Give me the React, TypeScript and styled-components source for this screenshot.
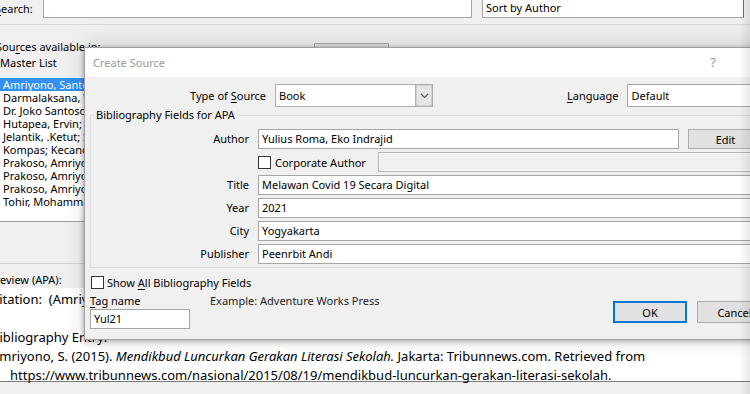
import React from "react";
import styled, { createGlobalStyle } from "styled-components";

const GlobalStyle = createGlobalStyle`
  html, body { margin: 0; padding: 0; background: #f0f0f0; }
  body {
    font-family: "Noto Sans", "Segoe UI", sans-serif;
    font-size: 11px;
    color: #000;
    overflow: hidden;
  }
  * { box-sizing: border-box; }
`;

const Screen = styled.div`
  position: relative;
  width: 750px;
  height: 394px;
  overflow: hidden;
  background: #f0f0f0;
`;

/* ---------- background window (Source Manager) ---------- */

const BackWindow = styled.div`
  margin-left: -12px;
  width: 820px;
  display: flex;
  flex-direction: column;
`;

const SearchRow = styled.div`
  display: flex;
  align-items: center;
  margin-top: -2px;
  height: 20px;
`;

const RowLabel = styled.span<{ $indent?: number; $width?: number }>`
  display: block;
  flex: none;
  padding-left: ${(p) => p.$indent ?? 0}px;
  width: ${(p) => (p.$width ? `${p.$width}px` : "auto")};
  line-height: 15px;
  white-space: nowrap;
`;

const Key = styled.span`
  text-decoration: underline;
  text-underline-offset: 2px;
`;

const Box = styled.div<{ $width?: number }>`
  flex: ${(p) => (p.$width ? "none" : "1")};
  width: ${(p) => (p.$width ? `${p.$width}px` : "auto")};
  height: 20px;
  background: #fff;
  border: 1px solid #a5a5a5;
  padding: 0 3px;
  line-height: 18px;
  white-space: nowrap;
  overflow: hidden;
`;

const SortBox = styled(Box)`
  margin-left: 10px;
  border-right-color: #6e6e6e;
`;

const Rule = styled.div<{ $top: number; $color?: string }>`
  margin-top: ${(p) => p.$top}px;
  height: 1px;
  background: ${(p) => p.$color ?? "#d9d9d9"};
`;

const SourcesRow = styled.div`
  display: flex;
  align-items: flex-start;
  height: 15px;
  margin-top: 14px;
`;

const BackButton = styled.div`
  margin-left: 210px;
  margin-top: 4px;
  width: 75px;
  height: 22px;
  background: #e1e1e1;
  border: 1px solid #adadad;
  flex: none;
`;

const MasterLabel = styled(RowLabel)`
  margin-top: 1px;
`;

const ListBox = styled.div`
  margin-top: 7px;
  width: 320px;
  height: 145px;
  background: #fff;
  border-bottom: 1px solid #a0a0a0;
  padding-top: 1px;
`;

const ListItem = styled.div<{ $selected?: boolean }>`
  height: 13px;
  line-height: 13px;
  padding-left: 15px;
  white-space: nowrap;
  background: ${(p) => (p.$selected ? "#3390f8" : "transparent")};
  color: ${(p) => (p.$selected ? "#fff" : "#000")};
`;

const PreviewLabel = styled(RowLabel)`
  margin-top: 8px;
`;

const PreviewBox = styled.div`
  margin-top: 1px;
  height: 94px;
  background: #fff;
  border-bottom: 1px solid #7a7a7a;
  padding: 2px 0 0 3px;
  font-size: 13px;
  line-height: 19px;
`;

const PreviewLine = styled.div<{ $hang?: boolean }>`
  white-space: pre;
  padding-left: ${(p) => (p.$hang ? 19 : 0)}px;
`;

/* ---------- dialog (Create Source) ---------- */

const Dialog = styled.div`
  position: absolute;
  left: 84px;
  top: 47px;
  width: 720px;
  height: 293px;
  background: #f0f0f0;
  border: 1px solid #9f9f9f;
  box-shadow: 0 -4px 22px rgba(0, 0, 0, 0.13), 0 3px 6px rgba(0, 0, 0, 0.18),
    -1px 0 4px rgba(0, 0, 0, 0.15);
  display: flex;
  flex-direction: column;
`;

const TitleBar = styled.div`
  height: 29px;
  background: #fff;
  display: flex;
  align-items: center;
  justify-content: space-between;
  padding-left: 8px;
  padding-bottom: 1px;
  color: #999;
  flex: none;
`;

const Help = styled.span`
  margin-right: 87px;
  font-size: 13px;
  color: #9a9a9a;
`;

const Body = styled.div`
  padding-top: 7px;
  display: flex;
  flex-direction: column;
`;

const TypeRow = styled.div`
  display: flex;
  align-items: center;
  height: 23px;
`;

const TypeLabel = styled.span`
  width: 181px;
  text-align: right;
  flex: none;
`;

const Select = styled.div`
  margin-left: 9px;
  width: 158px;
  height: 23px;
  display: flex;
  border: 1px solid #adadad;
  background: #fff;
  flex: none;
`;

const SelectValue = styled.div`
  flex: 1;
  padding-left: 3px;
  line-height: 21px;
`;

const SelectArrow = styled.div`
  width: 17px;
  background: #e5e5e5;
  border-left: 1px solid #adadad;
  box-shadow: inset 0 0 0 1px #d0d0d0;
  display: flex;
  align-items: center;
  justify-content: center;
`;

const LanguageLabel = styled.span`
  margin-left: 134px;
  flex: none;
`;

const LanguageBox = styled(Box)`
  margin-left: 9px;
  height: 23px;
  line-height: 21px;
`;

const Group = styled.fieldset`
  margin: 1px 0 0 5px;
  width: 700px;
  border: 1px solid #dcdcdc;
  padding: 7px 8px 3px 0;
  min-width: 0;
`;

const Legend = styled.legend`
  margin-left: 3px;
  padding: 0 2px;
  line-height: 14px;
`;

const FieldGrid = styled.div`
  display: grid;
  grid-template-columns: 158px 1fr;
  column-gap: 9px;
  row-gap: 3px;
  grid-auto-rows: 20px;
`;

const FieldName = styled.div`
  text-align: right;
  line-height: 20px;
`;

const FieldLine = styled.div`
  display: flex;
  align-items: center;
  min-width: 0;
`;

const Button = styled.div<{ $default?: boolean; $width: number; $height: number }>`
  width: ${(p) => p.$width}px;
  height: ${(p) => p.$height}px;
  flex: none;
  background: #e1e1e1;
  border: ${(p) => (p.$default ? "2px solid #0078d7" : "1px solid #adadad")};
  display: flex;
  align-items: center;
  justify-content: center;
`;

const EditButton = styled(Button)`
  margin-left: 9px;
`;

const Check = styled.span`
  display: block;
  width: 13px;
  height: 13px;
  border: 1px solid #333;
  background: #fff;
  flex: none;
`;

const CheckWrap = styled.div<{ $width?: number }>`
  display: flex;
  align-items: center;
  width: ${(p) => (p.$width ? `${p.$width}px` : "auto")};
  flex: none;
`;

const CheckText = styled.span<{ $gap: number }>`
  margin-left: ${(p) => p.$gap}px;
  white-space: nowrap;
`;

const DisabledBox = styled.div`
  flex: 1;
  height: 20px;
  background: #f0f0f0;
  border: 1px solid #b4b4b4;
  box-shadow: inset 0 0 0 1px #fafafa;
`;

const ShowAllRow = styled.div`
  margin-top: 7px;
  height: 15px;
  padding-left: 6px;
  display: flex;
  align-items: center;
`;

const BottomArea = styled.div`
  display: flex;
  align-items: flex-start;
`;

const TagColumn = styled.div`
  width: 528px;
  flex: none;
  padding-left: 5px;
  display: flex;
  flex-direction: column;
`;

const TagLine = styled.div`
  margin-top: 3px;
  height: 15px;
  line-height: 15px;
  display: flex;
`;

const TagName = styled.span`
  width: 120px;
  flex: none;
`;

const Example = styled.span`
  color: #1e1e1e;
  white-space: nowrap;
`;

const TagBox = styled(Box)`
  margin-top: 1px;
`;

const ButtonBar = styled.div`
  margin-top: 11px;
  display: flex;
  gap: 10px;
`;

const EdgeShade = styled.div`
  position: absolute;
  top: 0;
  right: 0;
  width: 12px;
  height: 100%;
  pointer-events: none;
  background: linear-gradient(to right, rgba(0, 0, 0, 0), rgba(0, 0, 0, 0.08));
`;

const sources = [
  "Amriyono, Santoso",
  "Darmalaksana, Wahyudin",
  "Dr. Joko Santoso",
  "Hutapea, Ervin; Ahmad",
  "Jelantik, .Ketut; Sutama",
  "Kompas; Kecanduan Gadget",
  "Prakoso, Amriyono",
  "Prakoso, Amriyono",
  "Prakoso, Amriyono",
  "Tohir, Mohammad",
];

const fields: [string, string][] = [
  ["Title", "Melawan Covid 19 Secara Digital"],
  ["Year", "2021"],
  ["City", "Yogyakarta"],
  ["Publisher", "Peenrbit Andi"],
];

const Chevron = () => (
  <svg width="9" height="6" viewBox="0 0 9 6">
    <path d="M1 1 L4.5 4.5 L8 1" fill="none" stroke="#555" strokeWidth="1.1" />
  </svg>
);

export default function App() {
  return (
    <Screen>
      <GlobalStyle />
      <BackWindow>
        <SearchRow>
          <RowLabel $indent={7} $width={55}>
            <Key>S</Key>earch:
          </RowLabel>
          <Box $width={429} />
          <SortBox $width={262}>Sort by Author</SortBox>
        </SearchRow>
        <Rule $top={6} />
        <SourcesRow>
          <RowLabel $indent={8} $width={116}>
            Sou<Key>r</Key>ces available in:
          </RowLabel>
          <BackButton />
        </SourcesRow>
        <MasterLabel $indent={12}>Master List</MasterLabel>
        <ListBox>
          {sources.map((s, i) => (
            <ListItem key={i} $selected={i === 0}>
              {s}
            </ListItem>
          ))}
        </ListBox>
        <Rule $top={41} $color="#d2d2d2" />
        <PreviewLabel $indent={1}>Preview (APA):</PreviewLabel>
        <PreviewBox>
          <PreviewLine>Citation:  (Amriyono, 2015)</PreviewLine>
          <PreviewLine> </PreviewLine>
          <PreviewLine>Bibliography Entry:</PreviewLine>
          <PreviewLine>
            Amriyono, S. (2015). <i>Mendikbud Luncurkan Gerakan Literasi Sekolah.</i> Jakarta:
            Tribunnews.com. Retrieved from
          </PreviewLine>
          <PreviewLine $hang>
            https://www.tribunnews.com/nasional/2015/08/19/mendikbud-luncurkan-gerakan-literasi-sekolah.
          </PreviewLine>
        </PreviewBox>
      </BackWindow>

      <Dialog>
        <TitleBar>
          <span>Create Source</span>
          <Help>?</Help>
        </TitleBar>
        <Body>
          <TypeRow>
            <TypeLabel>
              Type of <Key>S</Key>ource
            </TypeLabel>
            <Select>
              <SelectValue>Book</SelectValue>
              <SelectArrow>
                <Chevron />
              </SelectArrow>
            </Select>
            <LanguageLabel>
              <Key>L</Key>anguage
            </LanguageLabel>
            <LanguageBox $width={150}>Default</LanguageBox>
          </TypeRow>

          <Group>
            <Legend>Bibliography Fields for APA</Legend>
            <FieldGrid>
              <FieldName>Author</FieldName>
              <FieldLine>
                <Box $width={421}>Yulius Roma, Eko Indrajid</Box>
                <EditButton $width={75} $height={20}>
                  Edit
                </EditButton>
              </FieldLine>
              <div />
              <FieldLine>
                <CheckWrap $width={120}>
                  <Check />
                  <CheckText $gap={4}>Corporate Author</CheckText>
                </CheckWrap>
                <DisabledBox />
              </FieldLine>
              {fields.map(([name, value]) => (
                <React.Fragment key={name}>
                  <FieldName>{name}</FieldName>
                  <FieldLine>
                    <Box>{value}</Box>
                  </FieldLine>
                </React.Fragment>
              ))}
            </FieldGrid>
          </Group>

          <ShowAllRow>
            <CheckWrap>
              <Check />
              <CheckText $gap={3}>
                Show <Key>A</Key>ll Bibliography Fields
              </CheckText>
            </CheckWrap>
          </ShowAllRow>

          <BottomArea>
            <TagColumn>
              <TagLine>
                <TagName>
                  <Key>T</Key>ag name
                </TagName>
                <Example>Example: Adventure Works Press</Example>
              </TagLine>
              <TagBox $width={100}>Yul21</TagBox>
            </TagColumn>
            <ButtonBar>
              <Button $default $width={74} $height={22}>
                OK
              </Button>
              <Button $width={75} $height={22}>
                Cancel
              </Button>
            </ButtonBar>
          </BottomArea>
        </Body>
      </Dialog>
      <EdgeShade />
    </Screen>
  );
}
